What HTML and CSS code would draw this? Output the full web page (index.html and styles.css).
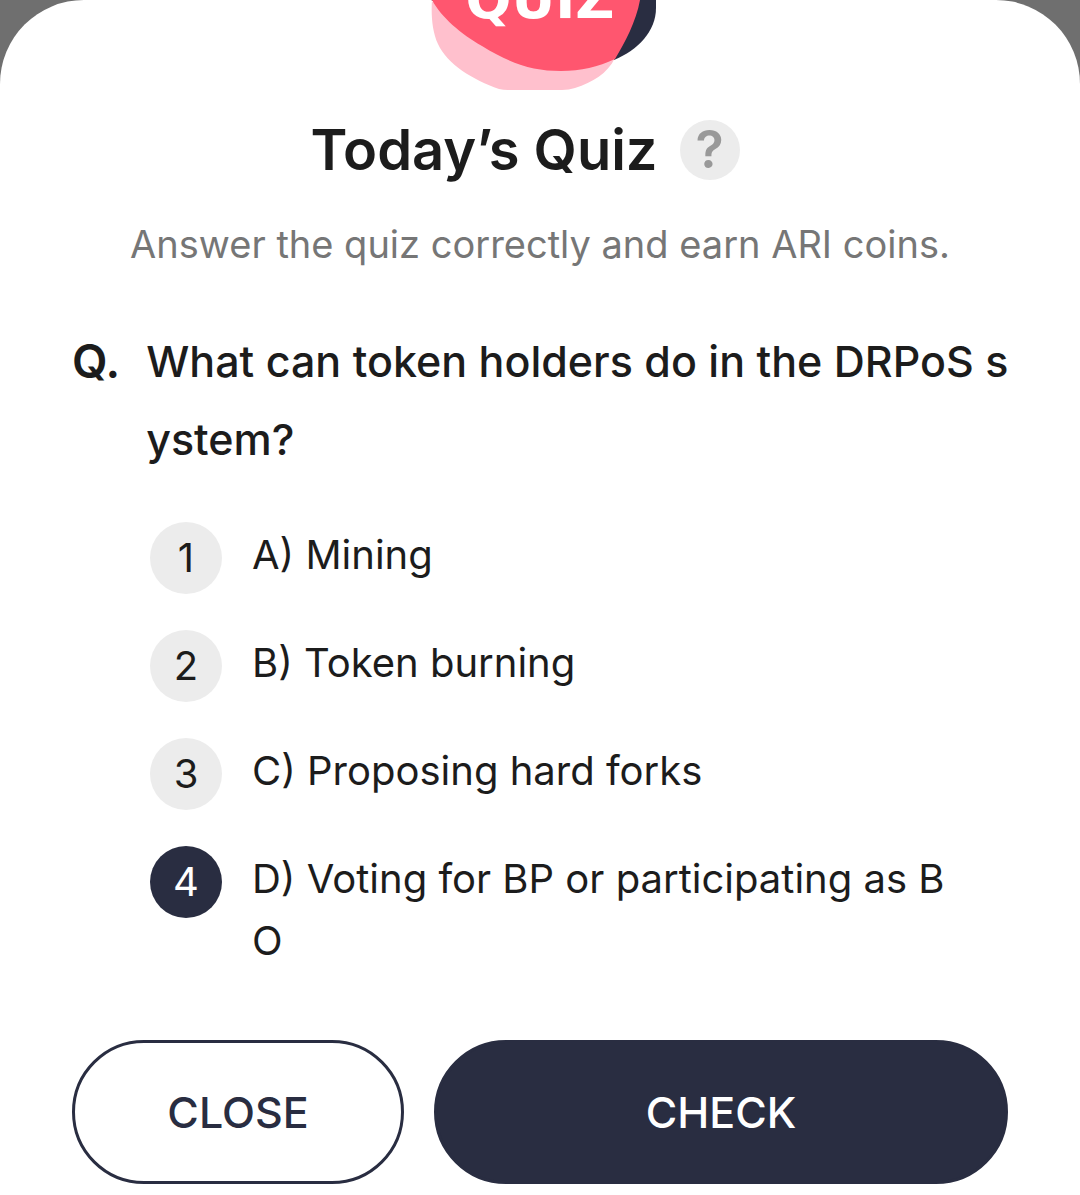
FILE: index.html
```html
<!DOCTYPE html>
<html lang="en">
<head>
<meta charset="utf-8">
<meta name="viewport" content="width=device-width, initial-scale=1">
<title>Today’s Quiz</title>
<link rel="stylesheet" href="styles.css">
</head>
<body>
<main class="sheet">
  <svg class="logo" viewBox="-6 0 232 90" role="img" aria-label="Quiz">
    <path d="M1 0H226V8C226 31 208 50 184 60L100 40Z" fill="#292d41"/>
    <path d="M2 0C1 14 2 31 8 44C17 64 43 80 69 89Q73 90 78 90H132Q139 90 145 88C163 82 177 74 185 58L100 20L2 2Z" fill="#ffc0cd"/>
    <path d="M2 0C11 17 31 34 52 46C81 64 103 71 131 71C151 71 168 67 185 59C195 42 206 22 210 0Z" fill="#ff566f"/>
    <text class="logo-text" x="110" y="18" text-anchor="middle">QUIZ</text>
  </svg>
  <header class="heading">
    <h1 class="title">Today’s Quiz</h1>
    <button class="help" type="button" aria-label="Help">?</button>
  </header>
  <p class="subtitle">Answer the quiz correctly and earn ARI coins.</p>
  <form class="quiz">
    <fieldset class="fields">
      <legend class="question"><span class="mark">Q.</span><span class="question-text">What can token holders do in the DRPoS system?</span></legend>
      <div class="options">
        <label class="option"><span class="badge"><input class="radio" type="radio" name="answer" value="1"><span class="number">1</span></span><span class="answer">A) Mining</span></label>
        <label class="option"><span class="badge"><input class="radio" type="radio" name="answer" value="2"><span class="number">2</span></span><span class="answer">B) Token burning</span></label>
        <label class="option"><span class="badge"><input class="radio" type="radio" name="answer" value="3"><span class="number">3</span></span><span class="answer">C) Proposing hard forks</span></label>
        <label class="option"><span class="badge"><input class="radio" type="radio" name="answer" value="4" checked><span class="number">4</span></span><span class="answer">D) Voting for BP or participating as BO</span></label>
      </div>
    </fieldset>
    <div class="actions">
      <button class="button close" type="button">CLOSE</button>
      <button class="button check" type="submit">CHECK</button>
    </div>
  </form>
</main>
</body>
</html>
```
FILE: styles.css
```css
* {
  box-sizing: border-box;
}

body {
  margin: 0;
  background: #6f6f6f;
  color: #1c1c1c;
  font-family: Inter, "Liberation Sans", sans-serif;
}

.sheet {
  display: flex;
  flex-direction: column;
  min-height: 100vh;
  padding: 0 72px 10px;
  border-radius: 84px 84px 0 0;
  background: #fff;
}

.logo {
  display: block;
  align-self: center;
  width: 232px;
  height: 90px;
}

.logo-text {
  fill: #fff;
  font-family: "DejaVu Sans", sans-serif;
  font-size: 54px;
  font-weight: 700;
}

.heading {
  display: flex;
  align-items: center;
  justify-content: center;
  gap: 22px;
  margin-top: 24px;
  padding-right: 30px;
}

.title {
  margin: 0;
  font-size: 56px;
  font-weight: 600;
  line-height: 72px;
}

.help {
  width: 60px;
  height: 60px;
  padding: 0;
  border: 0;
  border-radius: 50%;
  background: #ececec;
  color: #999;
  font: inherit;
  font-size: 52px;
  font-weight: 600;
  line-height: 60px;
}

.subtitle {
  margin: 28px 0 0;
  color: #767676;
  font-size: 38px;
  line-height: 60px;
  text-align: center;
}

.fields {
  min-width: 0;
  margin: 48px 0 0;
  padding: 0;
  border: 0;
}

.question {
  display: flex;
  gap: 26px;
  width: 100%;
  padding: 0;
  font-size: 43px;
  font-weight: 500;
  line-height: 78px;
}

.mark {
  flex: none;
  font-size: 46px;
  font-weight: 600;
}

.question-text,
.answer {
  word-break: break-all;
}

.question-text {
  margin-right: -10px;
}

.options {
  display: flex;
  flex-direction: column;
  gap: 36px;
  margin-top: 44px;
  padding: 0 54px 0 78px;
}

.option {
  display: flex;
  gap: 30px;
  font-size: 40px;
  line-height: 62px;
}

.badge {
  display: grid;
  flex: none;
  width: 72px;
  height: 72px;
  place-items: center;
}

.radio,
.number {
  grid-area: 1 / 1;
}

.radio {
  width: 72px;
  height: 72px;
  margin: 0;
  border-radius: 50%;
  background: #ececec;
  appearance: none;
}

.radio:checked {
  background: #292d41;
}

.radio:checked + .number {
  color: #fff;
}

.number {
  z-index: 1;
}

.answer {
  padding-top: 2px;
}

.actions {
  display: flex;
  gap: 30px;
  margin-top: 68px;
}

.button {
  height: 144px;
  padding: 0;
  border: 3px solid #292d41;
  border-radius: 72px;
  font: inherit;
  font-size: 43px;
  font-weight: 500;
}

.close {
  flex: 326 1 0;
  background: #fff;
  color: #292d41;
}

.check {
  flex: 568 1 0;
  background: #292d41;
  color: #fff;
}
```
